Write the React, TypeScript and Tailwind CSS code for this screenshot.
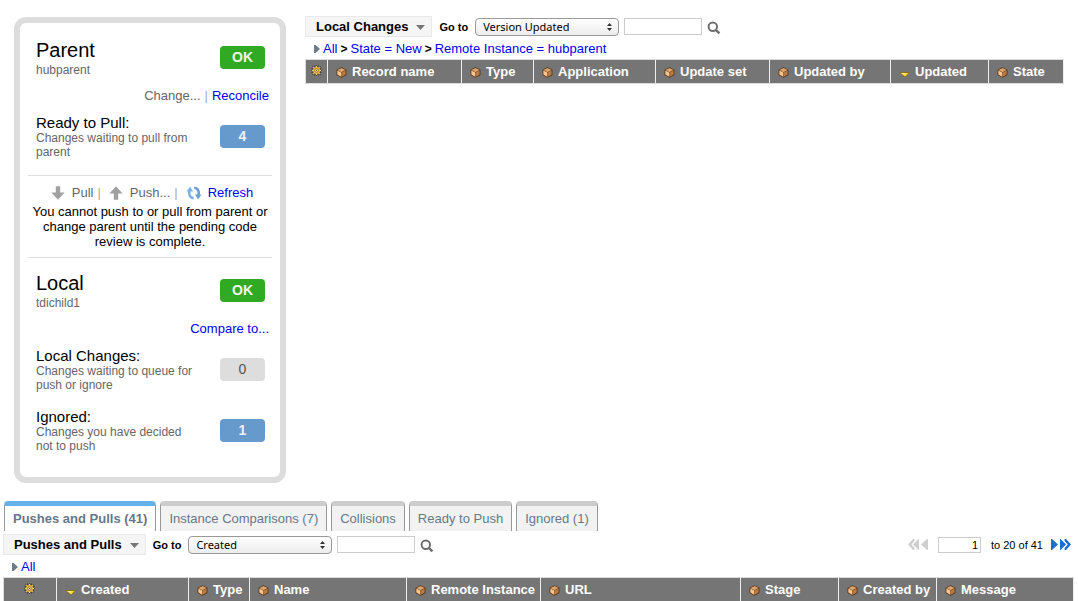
import type { ReactNode } from "react";

const stack = "font-['Liberation_Sans',Arial,sans-serif]";

function CubeIcon() {
  return (
    <svg width="11" height="11" viewBox="0 0 11 11" aria-hidden="true">
      <path d="M5.5 0.2 10.4 2.8V7.9L5.5 10.8 0.6 7.9V2.8Z" fill="#4a2a10" />
      <path d="M5.5 1 9.7 3.1 5.5 5.2 1.3 3.1Z" fill="#dda36c" />
      <path d="M1.3 3.4 5.4 5.4V9.9L1.3 7.6Z" fill="#fbc48c" />
      <path d="M9.7 3.4 5.7 5.4V9.9L9.7 7.6Z" fill="#b97a42" />
    </svg>
  );
}

function SortIcon() {
  return (
    <svg width="11" height="11" viewBox="0 0 11 11" aria-hidden="true">
      <path d="M0 5H11L6.5 10H5.5Z" fill="#8a7020" />
      <path d="M2 6H9.5L6 9.4Z" fill="#ffdf2e" />
      <path d="M2 6H6L5 7.5Z" fill="#fff9c0" />
    </svg>
  );
}

function GearIcon() {
  return (
    <svg width="11" height="11" viewBox="0 0 11 11" className="block" aria-hidden="true">
      <path
        d="M5.5 0V11M0 5.5H11M1.5 1.5 9.5 9.5M9.5 1.5 1.5 9.5M3.5 0.6 7.5 10.4M7.5 0.6 3.5 10.4M0.6 3.5 10.4 7.5M0.6 7.5 10.4 3.5"
        stroke="#2d2410"
        strokeWidth="0.9"
      />
      <circle cx="5.5" cy="5.5" r="3.5" fill="#f0b63a" />
      <path
        d="M5.5 0.8V2.6M5.5 8.4V10.2M0.8 5.5H2.6M8.4 5.5H10.2M2.2 2.2 3.4 3.4M7.6 7.6 8.8 8.8M8.8 2.2 7.6 3.4M3.4 7.6 2.2 8.8"
        stroke="#ffd66e"
      />
      <circle cx="5.5" cy="5.5" r="1.8" fill="#fff0b0" stroke="#6b4a10" strokeWidth="0.7" />
      <circle cx="5.5" cy="5.5" r="0.6" fill="#4a3208" />
    </svg>
  );
}

function SearchIcon() {
  return (
    <svg width="14" height="14" viewBox="0 0 14 14" fill="none" stroke="#6e6e6e" aria-hidden="true">
      <circle cx="5.8" cy="5.8" r="4.2" strokeWidth="2" />
      <path d="M8.8 8.8 12.4 12.4" strokeWidth="2.4" />
    </svg>
  );
}

function ArrowIcon({ up = false }: { up?: boolean }) {
  return (
    <svg width="14" height="14" viewBox="0 0 14 14" fill="#a0a0a0" aria-hidden="true">
      {up ? <path d="M7 0.2 13.6 7.6H9.2V13.8H4.8V7.6H0.4Z" /> : <path d="M7 13.8 13.6 6.4H9.2V0.2H4.8V6.4H0.4Z" />}
    </svg>
  );
}

function RefreshIcon() {
  return (
    <svg width="16" height="16" viewBox="0 0 16 16" aria-hidden="true">
      <g fill="none" strokeWidth="2.6">
        <path d="M7.6 13.2C4.4 13 2.6 10 3.4 6" stroke="#7db3ea" />
        <path d="M8.2 2.8C11.6 3 13.4 6 12.6 10" stroke="#6a9fd8" />
      </g>
      <path d="M0.6 6.4 4 1.6 7 6.4Z" fill="#7db3ea" />
      <path d="M15.4 9.6 12 14.6 9 9.6Z" fill="#6a9fd8" />
    </svg>
  );
}

function Badge({ tone, className, children }: { tone: "green" | "blue" | "gray"; className: string; children: ReactNode }) {
  const tones = {
    green: "bg-[#30aa22] font-bold text-[#f0f5ee]",
    blue: "bg-[#6699cc] font-bold text-[#eef2f6]",
    gray: "bg-[#dddddd] text-[#555555]",
  };
  return (
    <span className={`flex h-[23px] w-[45px] shrink-0 justify-center rounded pt-[3px] text-sm leading-4 ${tones[tone]} ${className}`}>
      {children}
    </span>
  );
}

function InstanceHeader({ title, name }: { title: string; name: string }) {
  return (
    <div className="flex items-start justify-between pr-[7px] pl-2">
      <div>
        <h2 className="text-xl leading-[26px]">{title}</h2>
        <p className="text-xs leading-[14px] text-[#666]">{name}</p>
      </div>
      <Badge tone="green" className="mt-[9px]">OK</Badge>
    </div>
  );
}

function Stat({ title, text, value, tone }: { title: string; text: string; value: number; tone: "blue" | "gray" }) {
  return (
    <div className="flex items-start justify-between pr-[7px] pl-2">
      <div className="w-40">
        <h3 className="text-[15px] leading-4">{title}</h3>
        <p className="text-xs leading-[14px] text-[#666]">{text}</p>
      </div>
      <Badge tone={tone} className="mt-[10px]">{value}</Badge>
    </div>
  );
}

function ListToolbar({ id, title, option, children }: { id: string; title: string; option: string; children?: ReactNode }) {
  return (
    <div className="flex h-[21px] items-center">
      <button type="button" className="flex h-[21px] items-center gap-2 border border-[#e9e9e9] bg-[#f5f5f5] pr-1.5 pl-2.5 text-[13px] font-bold">
        {title}
        <svg width="9" height="5" viewBox="0 0 9 5" fill="#777" className="mt-0.5" aria-hidden="true">
          <path d="M0 0H9L4.5 5Z" />
        </svg>
      </button>
      <label htmlFor={`${id}-field`} className="ml-[7px] text-[11px] leading-4 font-bold">Go to</label>
      <span className="relative ml-[7px] flex">
        <select
          id={`${id}-field`}
          className="h-[18px] w-36 appearance-none rounded border border-[#999] bg-linear-to-b from-white to-[#ececec] pl-[7px] font-['Noto_Sans',sans-serif] text-[11px] leading-4"
        >
          <option>{option}</option>
        </select>
        <svg width="5" height="8" viewBox="0 0 5 8" fill="#333" className="pointer-events-none absolute top-[5px] right-[7px]" aria-hidden="true">
          <path d="M2.5 0 5 3H0ZM2.5 8 5 5H0Z" />
        </svg>
      </span>
      <input type="text" aria-label={`Search ${title}`} className="ml-[5px] h-[17px] w-[78px] border border-[#ccc] px-1 text-[11px]" />
      <button type="button" aria-label="Search" className="mt-0.5 ml-[5px]">
        <SearchIcon />
      </button>
      {children}
    </div>
  );
}

function Breadcrumb({ items }: { items: string[] }) {
  return (
    <nav className="flex h-[22px] items-center pt-0.5 pl-[9px] text-[13px] leading-4">
      <svg width="6" height="8" viewBox="0 0 6 8" fill="#6b7b88" className="mr-[3px]" aria-hidden="true">
        <path d="M0 0H1.5L6 4 1.5 8H0Z" />
      </svg>
      {items.map((item, i) => (
        <span key={item}>
          {i > 0 && <span className="px-[3px] text-xs font-bold">&gt;</span>}
          <a href="#" className="text-[#0000ee]">{item}</a>
        </span>
      ))}
    </nav>
  );
}

type Column = { label: string; width: string; sorted?: boolean };

function ListTable({ gearWidth, columns }: { gearWidth: string; columns: Column[] }) {
  return (
    <table className="w-full table-fixed border-separate border-spacing-0 border-y border-l border-[#ddd] text-left text-[13px] leading-4 text-white">
      <thead>
        <tr className="h-[23px] bg-[#757575]">
          <th className={`border-r border-[#eee] p-0 ${gearWidth}`} aria-label="Personalize list">
            <button type="button" aria-label="Personalize list" className="flex w-full justify-center pr-px pb-0.5">
              <GearIcon />
            </button>
          </th>
          {columns.map((c) => (
            <th key={c.label} className={`border-r border-[#eee] py-0 pr-0 pl-2 ${c.width}`}>
              <a href="#" className="flex items-center gap-[5px] whitespace-nowrap">
                <span className="mt-px shrink-0">{c.sorted ? <SortIcon /> : <CubeIcon />}</span>
                {c.label}
              </a>
            </th>
          ))}
        </tr>
      </thead>
    </table>
  );
}

const changeColumns: Column[] = [
  { label: "Record name", width: "w-[134px]" },
  { label: "Type", width: "w-[72px]" },
  { label: "Application", width: "w-[122px]" },
  { label: "Update set", width: "w-[114px]" },
  { label: "Updated by", width: "w-[121px]" },
  { label: "Updated", width: "w-[98px]", sorted: true },
  { label: "State", width: "w-auto" },
];

const pushColumns: Column[] = [
  { label: "Created", width: "w-[132px]", sorted: true },
  { label: "Type", width: "w-[61px]" },
  { label: "Name", width: "w-[157px]" },
  { label: "Remote Instance", width: "w-[134px]" },
  { label: "URL", width: "w-[200px]" },
  { label: "Stage", width: "w-[98px]" },
  { label: "Created by", width: "w-[98px]" },
  { label: "Message", width: "w-auto" },
];

const tabs = ["Pushes and Pulls (41)", "Instance Comparisons (7)", "Collisions", "Ready to Push", "Ignored (1)"];

function Divider() {
  return <span className="text-[#aaa]">|</span>;
}

function Pager() {
  return (
    <div className="ml-auto flex items-center pr-[3px] text-[11px] leading-4">
      <button type="button" aria-label="First page">
        <svg width="12" height="11" viewBox="0 0 12 11" fill="#cfcfcf" aria-hidden="true">
          <path d="M5 0H6.5V2L3.5 5.5 6.5 9V11H5L0 5.5Z" />
          <path d="M10.5 0H11V11H10.5L5 5.5Z" />
        </svg>
      </button>
      <button type="button" aria-label="Previous page" className="ml-px">
        <svg width="7" height="11" viewBox="0 0 7 11" fill="#cfcfcf" aria-hidden="true">
          <path d="M6 0H7V11H6L0 5.5Z" />
        </svg>
      </button>
      <input type="text" defaultValue="1" aria-label="First row" className="ml-2.5 h-4 w-[43px] border border-[#ccc] px-0.5 text-right text-[11px]" />
      <span className="ml-2.5">to 20 of 41</span>
      <button type="button" aria-label="Next page" className="ml-2">
        <svg width="7" height="11" viewBox="0 0 7 11" fill="#1c6fd0" aria-hidden="true">
          <path d="M0 0H1L7 5.5 1 11H0Z" />
        </svg>
      </button>
      <button type="button" aria-label="Last page" className="ml-0.5">
        <svg width="11" height="11" viewBox="0 0 11 11" fill="#1c6fd0" aria-hidden="true">
          <path d="M0 0H0.5L6 5.5 0.5 11H0Z" />
          <path d="M4.6 0H6L11 5.5 6 11H4.6V9L7.8 5.5 4.6 2Z" />
        </svg>
      </button>
    </div>
  );
}

export default function App() {
  return (
    <main className={`overflow-hidden bg-white text-black ${stack}`}>
      <div className="flex items-start pr-3.5 pl-3.5">
        <aside className="mt-[17px] w-[272px] shrink-0 rounded-xl border-[6px] border-[#dddddd] px-2 pb-6">
          <section className="pt-3.5 pb-4">
            <InstanceHeader title="Parent" name="hubparent" />
            <div className="mt-[11px] mb-[11px] flex justify-end gap-1 pr-[3px] text-[13px] leading-4">
              <span className="text-[#666]">Change...</span>
              <Divider />
              <a href="#" className="text-[#0000ee]">Reconcile</a>
            </div>
            <Stat title="Ready to Pull:" text="Changes waiting to pull from parent" value={4} tone="blue" />
          </section>
          <section className="border-y border-[#ddd] pt-[9px] pb-2 text-[13px]">
            <div className="flex items-center justify-center pl-1 leading-4 text-[#666]">
              <ArrowIcon />
              <span className="mr-1 ml-[7px]">Pull</span>
              <Divider />
              <span className="mr-[7px] ml-2"><ArrowIcon up /></span>
              <span className="mr-1">Push...</span>
              <Divider />
              <span className="mr-1.5 ml-2"><RefreshIcon /></span>
              <a href="#" className="text-[#0000ee]">Refresh</a>
            </div>
            <p className="mt-[3px] text-center leading-[15px]">
              You cannot push to or pull from parent or change parent until the pending code review is complete.
            </p>
          </section>
          <section className="pt-3">
            <InstanceHeader title="Local" name="tdichild1" />
            <div className="mt-[11px] mb-[11px] flex justify-end pr-[3px] text-[13px] leading-4">
              <a href="#" className="text-[#0000ee]">Compare to...</a>
            </div>
            <div className="flex flex-col gap-[17px]">
              <Stat title="Local Changes:" text="Changes waiting to queue for push or ignore" value={0} tone="gray" />
              <Stat title="Ignored:" text="Changes you have decided not to push" value={1} tone="blue" />
            </div>
          </section>
        </aside>
        <section className="mt-4 ml-[19px] min-w-0 flex-1">
          <ListToolbar id="changes" title="Local Changes" option="Version Updated" />
          <Breadcrumb items={["All", "State = New", "Remote Instance = hubparent"]} />
          <ListTable gearWidth="w-[22px]" columns={changeColumns} />
        </section>
      </div>
      <section className="mt-[18px] pr-1 pl-[3px]">
        <div role="tablist" className="flex gap-1 pl-px text-[13px] leading-4">
          {tabs.map((tab, i) => (
            <button
              key={tab}
              type="button"
              role="tab"
              aria-selected={i === 0}
              className={
                i === 0
                  ? "h-[30px] rounded-t border-x border-t-[5px] border-x-[#999] border-t-[#66b2ea] bg-white px-2 font-bold text-[#66788a]"
                  : "h-[30px] rounded-t border-x border-t-[5px] border-x-[#999] border-t-[#ccc] bg-[#f2f2f2] px-2 text-[#66788a]"
              }
            >
              {tab}
            </button>
          ))}
        </div>
        <div className="pt-[3px]">
          <ListToolbar id="pushes" title="Pushes and Pulls" option="Created">
            <Pager />
          </ListToolbar>
          <Breadcrumb items={["All"]} />
          <ListTable gearWidth="w-[53px]" columns={pushColumns} />
        </div>
      </section>
    </main>
  );
}
